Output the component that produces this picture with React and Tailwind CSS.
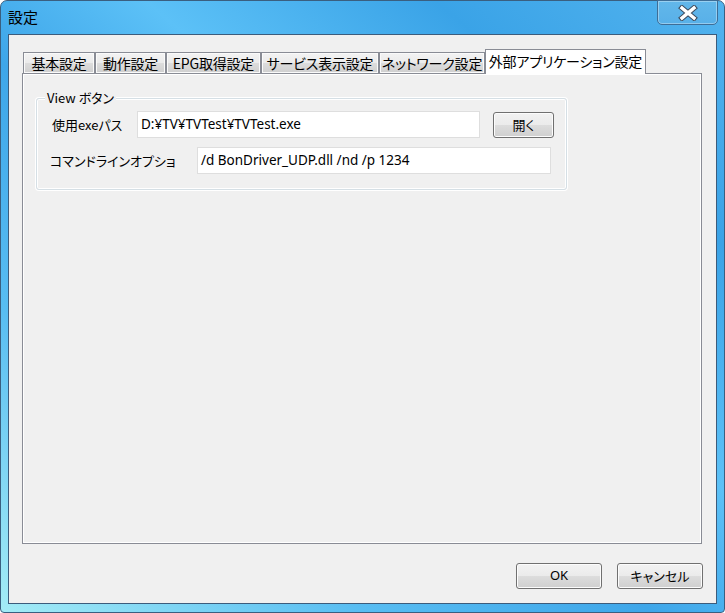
const jp = "font-['Noto_Sans_CJK_JP',sans-serif] [font-feature-settings:'palt'] whitespace-nowrap";
const latin = "font-['Noto_Sans','Noto_Sans_CJK_JP',sans-serif] whitespace-nowrap";

const tabs = [
	{ label: "基本設定", w: "w-[72px]" },
	{ label: "動作設定", w: "w-[71px]" },
	{ label: "EPG取得設定", w: "w-[95px]" },
	{ label: "サービス表示設定", w: "w-[118px]" },
	{ label: "ネットワーク設定", w: "w-[106px]" },
];

const WinButton = ({ children, className = "" }) => (
	<button
		className={`flex items-center justify-center rounded-[3px] border border-[#707070] bg-[linear-gradient(to_bottom,#f2f2f2_0%,#ebebeb_50%,#dddddd_50%,#cfcfcf_100%)] shadow-[inset_0_0_0_1px_#fcfcfc] text-[13px] text-black ${className}`}
	>
		{children}
	</button>
);

const CloseIcon = () => (
	<svg width="20" height="16" viewBox="0 0 20 16">
		<path d="M4 3 L16 13 M16 3 L4 13" stroke="#3b4a5c" strokeWidth="5.5" strokeLinecap="square" />
		<path d="M4 3 L16 13 M16 3 L4 13" stroke="#ffffff" strokeWidth="3.4" strokeLinecap="square" />
	</svg>
);

export default function App() {
	return (
		<div className="w-[725px] h-[613px] bg-white">
			<div className="relative w-[725px] h-[613px] rounded-t-[7px] rounded-b-[4px] border border-[#3a5f80] bg-[linear-gradient(to_top_right,#a4ecf6_0%,#58bdf2_25%,#3ea6e9_45%,#5cc1f7_60%,#3aa3e7_80%,#52b3ee_100%)] flex flex-col">
				{/* title bar */}
				<div className="h-[33px] flex items-center pl-[7px] pb-[2px]">
					<span className={`${jp} text-[15px] text-black leading-none`}>設定</span>
				</div>
				<div className="absolute top-[-1px] left-[656px] w-[61px] h-[25px] rounded-b-[5px] border border-[#3e6d96] bg-[linear-gradient(to_bottom,#62b7ea,#58b0e8)] shadow-[inset_0_0_0_1px_rgba(255,255,255,0.35)] flex items-center justify-center">
					<CloseIcon />
				</div>

				{/* client area */}
				<div className="ml-[7px] mr-[7px] h-[570px] border border-[#3c5c7c] bg-[#f0f0f0] flex flex-col">
					{/* tab control */}
					<div className="ml-[13px] mt-[15px] w-[680px] flex flex-col">
						<div className="h-[23px] flex items-end pl-[1px]">
							{tabs.map((t) => (
								<div
									key={t.label}
									className={`${t.w} h-[21px] border border-b-0 border-[#898c95] bg-[linear-gradient(to_bottom,#f3f3f3_0%,#ebebeb_50%,#dddddd_50%,#cfcfcf_100%)] shadow-[inset_0_0_0_1px_#fafafa] flex items-center justify-center ${jp} text-[14px] tracking-[-0.2px] text-black leading-none`}
								>
									{t.label}
								</div>
							))}
							<div
								className={`relative z-10 -mb-px w-[161px] h-[25px] border border-b-0 border-[#898c95] bg-white flex items-center justify-center pb-[2px] ${jp} text-[14px] tracking-[-0.2px] text-black leading-none`}
							>
								外部アプリケーション設定
							</div>
						</div>
						<div className="h-[471px] border border-[#898c95] bg-[#f0f0f0] shadow-[inset_0_0_0_1px_#ffffff]">
							{/* group box */}
							<div className="relative ml-[13px] mt-[24px] w-[531px] h-[92px] rounded-[3px] border border-[#d5dfe5] shadow-[inset_0_0_0_1px_#ffffff,0_0_0_1px_#ffffff] pt-[12px]">
								<span className={`absolute left-[8px] top-[-10px] bg-[#f0f0f0] px-[2px] ${jp} text-[13px] leading-[18px] text-black`}>
									View ボタン
								</span>
								<div className="flex items-center pl-[15px]">
									<span className={`w-[85px] ${jp} text-[13px] text-black`}>使用exeパス</span>
									<div className={`w-[343px] h-[27px] border border-[#dedede] bg-white flex items-center pl-[3px] ${latin} text-[13.5px] text-black`}>
										D:¥TV¥TVTest¥TVTest.exe
									</div>
									<WinButton className={`ml-[13px] w-[61px] h-[26px] ${jp}`}>開く</WinButton>
								</div>
								<div className="flex items-center pl-[13px] mt-[9px]">
									<span className={`w-[147px] ${jp} text-[13px] text-black`}>コマンドラインオプショ</span>
									<div className={`w-[354px] h-[27px] border border-[#dedede] bg-white flex items-center pl-[3px] ${latin} text-[13.5px] text-black`}>
										/d BonDriver_UDP.dll /nd /p 1234
									</div>
								</div>
							</div>
						</div>
					</div>
					{/* dialog buttons */}
					<div className="flex justify-end gap-[15px] mt-[19px] mr-[13px]">
						<WinButton className={`w-[86px] h-[26px] ${latin}`}>OK</WinButton>
						<WinButton className={`w-[86px] h-[26px] ${jp}`}>キャンセル</WinButton>
					</div>
				</div>
			</div>
		</div>
	);
}
